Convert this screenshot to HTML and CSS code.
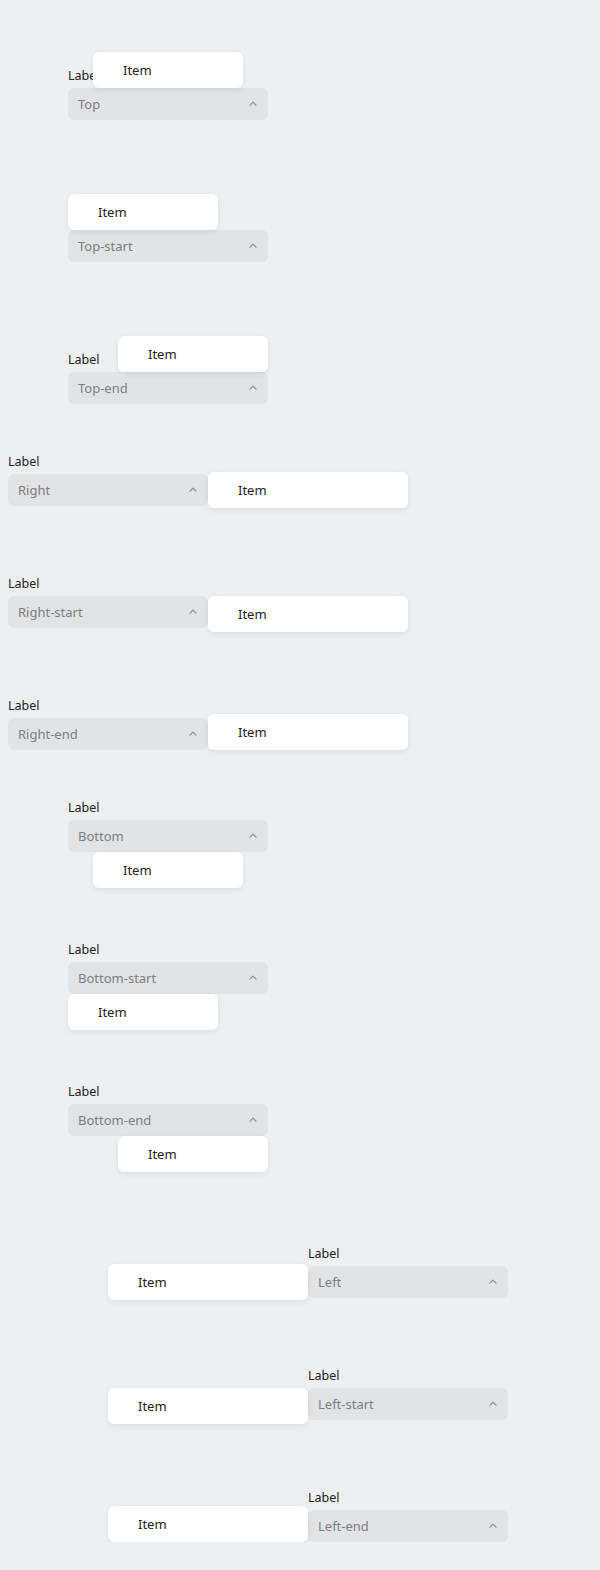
FILE: index.html
```html
<!DOCTYPE html>
<html lang="en">
<head>
<meta charset="utf-8">
<title>Select placements</title>
<link rel="stylesheet" href="styles.css">
</head>
<body>
<main class="page">
  <section class="group group-top">
    <div class="field indent-v">
      <div class="label">Label</div>
      <div class="control">
        <span class="value">Top</span>
        <svg class="chev" width="8" height="5" viewBox="0 0 8 5"><path d="M1 4.2 L4 1.2 L7 4.2" fill="none" stroke="#88898b" stroke-width="1.2" stroke-linecap="round" stroke-linejoin="round"/></svg>
        <div class="popup narrow pos-top"><div class="item">Item</div></div>
      </div>
    </div>
    <div class="field indent-v">
      <div class="label">Label</div>
      <div class="control">
        <span class="value">Top-start</span>
        <svg class="chev" width="8" height="5" viewBox="0 0 8 5"><path d="M1 4.2 L4 1.2 L7 4.2" fill="none" stroke="#88898b" stroke-width="1.2" stroke-linecap="round" stroke-linejoin="round"/></svg>
        <div class="popup narrow pos-top-start"><div class="item">Item</div></div>
      </div>
    </div>
    <div class="field indent-v">
      <div class="label">Label</div>
      <div class="control">
        <span class="value">Top-end</span>
        <svg class="chev" width="8" height="5" viewBox="0 0 8 5"><path d="M1 4.2 L4 1.2 L7 4.2" fill="none" stroke="#88898b" stroke-width="1.2" stroke-linecap="round" stroke-linejoin="round"/></svg>
        <div class="popup narrow pos-top-end"><div class="item">Item</div></div>
      </div>
    </div>
  </section>

  <section class="group group-right">
    <div class="field">
      <div class="label">Label</div>
      <div class="control">
        <span class="value">Right</span>
        <svg class="chev" width="8" height="5" viewBox="0 0 8 5"><path d="M1 4.2 L4 1.2 L7 4.2" fill="none" stroke="#88898b" stroke-width="1.2" stroke-linecap="round" stroke-linejoin="round"/></svg>
        <div class="popup wide pos-right"><div class="item">Item</div></div>
      </div>
    </div>
    <div class="field">
      <div class="label">Label</div>
      <div class="control">
        <span class="value">Right-start</span>
        <svg class="chev" width="8" height="5" viewBox="0 0 8 5"><path d="M1 4.2 L4 1.2 L7 4.2" fill="none" stroke="#88898b" stroke-width="1.2" stroke-linecap="round" stroke-linejoin="round"/></svg>
        <div class="popup wide pos-right-start"><div class="item">Item</div></div>
      </div>
    </div>
    <div class="field">
      <div class="label">Label</div>
      <div class="control">
        <span class="value">Right-end</span>
        <svg class="chev" width="8" height="5" viewBox="0 0 8 5"><path d="M1 4.2 L4 1.2 L7 4.2" fill="none" stroke="#88898b" stroke-width="1.2" stroke-linecap="round" stroke-linejoin="round"/></svg>
        <div class="popup wide pos-right-end"><div class="item">Item</div></div>
      </div>
    </div>
  </section>

  <section class="group group-bottom">
    <div class="field indent-v">
      <div class="label">Label</div>
      <div class="control">
        <span class="value">Bottom</span>
        <svg class="chev" width="8" height="5" viewBox="0 0 8 5"><path d="M1 4.2 L4 1.2 L7 4.2" fill="none" stroke="#88898b" stroke-width="1.2" stroke-linecap="round" stroke-linejoin="round"/></svg>
        <div class="popup narrow pos-bottom"><div class="item">Item</div></div>
      </div>
    </div>
    <div class="field indent-v">
      <div class="label">Label</div>
      <div class="control">
        <span class="value">Bottom-start</span>
        <svg class="chev" width="8" height="5" viewBox="0 0 8 5"><path d="M1 4.2 L4 1.2 L7 4.2" fill="none" stroke="#88898b" stroke-width="1.2" stroke-linecap="round" stroke-linejoin="round"/></svg>
        <div class="popup narrow pos-bottom-start"><div class="item">Item</div></div>
      </div>
    </div>
    <div class="field indent-v">
      <div class="label">Label</div>
      <div class="control">
        <span class="value">Bottom-end</span>
        <svg class="chev" width="8" height="5" viewBox="0 0 8 5"><path d="M1 4.2 L4 1.2 L7 4.2" fill="none" stroke="#88898b" stroke-width="1.2" stroke-linecap="round" stroke-linejoin="round"/></svg>
        <div class="popup narrow pos-bottom-end"><div class="item">Item</div></div>
      </div>
    </div>
  </section>

  <section class="group group-left">
    <div class="field indent-l">
      <div class="label">Label</div>
      <div class="control">
        <span class="value">Left</span>
        <svg class="chev" width="8" height="5" viewBox="0 0 8 5"><path d="M1 4.2 L4 1.2 L7 4.2" fill="none" stroke="#88898b" stroke-width="1.2" stroke-linecap="round" stroke-linejoin="round"/></svg>
        <div class="popup wide pos-left"><div class="item">Item</div></div>
      </div>
    </div>
    <div class="field indent-l">
      <div class="label">Label</div>
      <div class="control">
        <span class="value">Left-start</span>
        <svg class="chev" width="8" height="5" viewBox="0 0 8 5"><path d="M1 4.2 L4 1.2 L7 4.2" fill="none" stroke="#88898b" stroke-width="1.2" stroke-linecap="round" stroke-linejoin="round"/></svg>
        <div class="popup wide pos-left-start"><div class="item">Item</div></div>
      </div>
    </div>
    <div class="field indent-l">
      <div class="label">Label</div>
      <div class="control">
        <span class="value">Left-end</span>
        <svg class="chev" width="8" height="5" viewBox="0 0 8 5"><path d="M1 4.2 L4 1.2 L7 4.2" fill="none" stroke="#88898b" stroke-width="1.2" stroke-linecap="round" stroke-linejoin="round"/></svg>
        <div class="popup wide pos-left-end"><div class="item">Item</div></div>
      </div>
    </div>
  </section>
</main>
</body>
</html>
```

FILE: styles.css
```css
html, body {
  background: #eeeff1;
}
body {
  margin: 8px;
  font-family: "Noto Sans", "DejaVu Sans", sans-serif;
  font-size: 13px;
  color: #1f2022;
}
.page {
  display: flex;
  flex-direction: column;
}
.group {
  display: flex;
  flex-direction: column;
}
.group-top { margin-top: 60px; gap: 90px; }
.group-right { margin-top: 50px; gap: 70px; }
.group-bottom { margin-top: 50px; gap: 90px; }
.group-left { margin-top: 110px; gap: 70px; }

.field {
  width: 200px;
  display: flex;
  flex-direction: column;
  gap: 4px;
}
.indent-v { margin-left: 60px; }
.indent-l { margin-left: 300px; }

.label {
  height: 16px;
  line-height: 16px;
  font-size: 12.5px;
  color: #1f2022;
}
.control {
  position: relative;
  height: 32px;
  box-sizing: border-box;
  background: #e2e3e5;
  border-radius: 6px;
  padding: 0 11px 0 10px;
  display: flex;
  align-items: center;
  justify-content: space-between;
}
.value {
  color: #7d7e81;
  font-size: 13px;
}
.chev { display: block; margin-top: -1px; }

.popup {
  position: absolute;
  z-index: 2;
  height: 36px;
  box-sizing: border-box;
  background: #ffffff;
  border-radius: 6px;
  box-shadow: 0 2px 6px rgba(0, 0, 0, 0.07), 0 0 1px rgba(0, 0, 0, 0.04);
  display: flex;
  align-items: center;
}
.narrow { width: 150px; }
.wide { width: 200px; }
.item {
  padding-left: 30px;
  color: #1f2022;
  font-size: 13px;
}

.pos-top { bottom: 100%; left: 25px; }
.pos-top-start { bottom: 100%; left: 0; }
.pos-top-end { bottom: 100%; right: 0; }
.pos-bottom { top: 100%; left: 25px; }
.pos-bottom-start { top: 100%; left: 0; }
.pos-bottom-end { top: 100%; right: 0; }
.pos-right { left: 100%; top: -2px; }
.pos-right-start { left: 100%; top: 0; }
.pos-right-end { left: 100%; bottom: 0; }
.pos-left { right: 100%; top: -2px; }
.pos-left-start { right: 100%; top: 0; }
.pos-left-end { right: 100%; bottom: 0; }
```
